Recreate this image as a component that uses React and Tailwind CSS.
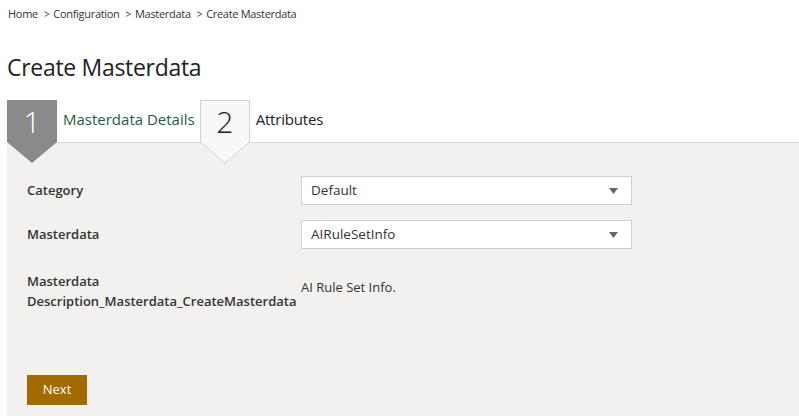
export default function App() {
  const crumbs = ["Home", "Configuration", "Masterdata", "Create Masterdata"];
  return (
    <div className="min-h-[416px] bg-white flex flex-col text-[#333]" style={{ fontFamily: '"Open Sans", "Noto Sans", sans-serif' }}>
      {/* breadcrumb */}
      <div className="flex items-center pl-[8px] pt-[6px] text-[11px] leading-[16px] text-[#333] tracking-[-0.3px]">
        {crumbs.map((c, i) => (
          <span key={c} className="flex items-center">
            {i > 0 && <span className="ml-[6px] mr-[4px] text-[10px]">&gt;</span>}
            {c}
          </span>
        ))}
      </div>

      <h1 className="pl-[7px] mt-[31px] text-[23px] leading-[28px] text-[#222] tracking-[-0.3px]">
        Create Masterdata
      </h1>

      {/* wizard steps */}
      <div className="flex items-end pl-[7px] mt-[19px] h-[42px] relative z-10">
        <div className="relative w-[50px] h-[42px] shrink-0">
          <svg className="absolute left-0 top-0" width="50" height="64" viewBox="0 0 50 64">
            <polygon points="0,0 50,0 50,42 25,63 0,42" fill="#8a8a8a" />
          </svg>
          <span className="absolute inset-0 flex items-center justify-center text-white text-[30px] font-light">1</span>
        </div>
        <div className="h-[42px] flex items-center pl-[6px] pr-[5px] pb-[4px] text-[15px] text-[#1f5c45]">
          Masterdata Details
        </div>
        <div className="relative w-[50px] h-[42px] shrink-0">
          <svg className="absolute left-0 top-0" width="50" height="64" viewBox="0 0 50 64">
            <polygon points="0.5,0.5 49.5,0.5 49.5,42 25,63 0.5,42" fill="#f8f8f8" stroke="#d2d2d2" />
          </svg>
          <span className="absolute inset-0 flex items-center justify-center text-[#222] text-[30px] font-light">2</span>
        </div>
        <div className="h-[42px] flex items-center pl-[6px] pb-[4px] text-[15px] text-[#222] tracking-[-0.2px]">
          Attributes
        </div>
      </div>

      {/* panel */}
      <div className="ml-[7px] flex-1 bg-[#f2f1f0] border-t border-[#d8d8d8] pt-[33px] pl-[20px] pb-[10px] text-[13px]">
        <div className="flex items-center h-[29px]">
          <div className="w-[274px] font-semibold text-[#333]">Category</div>
          <Select value="Default" />
        </div>
        <div className="flex items-center h-[29px] mt-[15px]">
          <div className="w-[274px] font-semibold text-[#333]">Masterdata</div>
          <Select value="AIRuleSetInfo" />
        </div>
        <div className="flex items-center mt-[22px]">
          <div className="w-[274px] font-semibold text-[#333] leading-[20px]">
            Masterdata
            <br />
            Description_Masterdata_CreateMasterdata
          </div>
          <div className="text-[#333] pb-[6px]">AI Rule Set Info.</div>
        </div>
        <button className="mt-[64px] w-[60px] h-[30px] bg-[#a36a00] text-white text-[13px]">Next</button>
      </div>
    </div>
  );
}

function Select({ value }) {
  return (
    <div className="w-[331px] h-[29px] bg-white border border-[#cfcfcf] flex items-center justify-between pl-[9px] pr-[13px] text-[#333] text-[13.5px]">
      <span>{value}</span>
      <svg width="9" height="6" viewBox="0 0 9 6">
        <polygon points="0,0 9,0 4.5,6" fill="#666" />
      </svg>
    </div>
  );
}
